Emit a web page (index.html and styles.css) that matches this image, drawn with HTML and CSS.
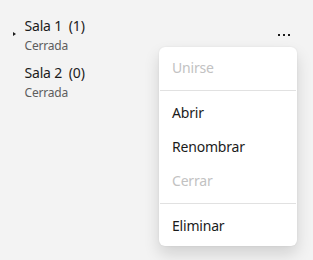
FILE: index.html
```html
<!DOCTYPE html>
<html lang="es">
<head>
<meta charset="utf-8">
<link rel="stylesheet" href="styles.css">
</head>
<body>
<div class="page">
  <ul class="rooms">
    <li class="room current">
      <span class="marker"></span>
      <div class="info">
        <div class="title">Sala 1&nbsp; (1)</div>
        <div class="sub">Cerrada</div>
      </div>
      <button class="more" aria-label="Más opciones">
        <svg width="14" height="4" viewBox="0 0 14 4"><rect x="0" y="1" width="2" height="2"/><rect x="5" y="1" width="2" height="2"/><rect x="10" y="1" width="2" height="2"/></svg>
      </button>
    </li>
    <li class="room">
      <span class="marker hidden"></span>
      <div class="info">
        <div class="title">Sala 2&nbsp; (0)</div>
        <div class="sub">Cerrada</div>
      </div>
    </li>
  </ul>
  <div class="menu">
    <div class="item disabled">Unirse</div>
    <div class="sep"></div>
    <div class="item">Abrir</div>
    <div class="item">Renombrar</div>
    <div class="item disabled">Cerrar</div>
    <div class="sep"></div>
    <div class="item">Eliminar</div>
  </div>
</div>
</body>
</html>
```
FILE: styles.css
```css
html, body {
  margin: 0;
  padding: 0;
  background: #f3f3f3;
}
body {
  font-family: "Noto Sans", "Open Sans", sans-serif;
  color: #1b1b1b;
  width: 313px;
  height: 260px;
  overflow: hidden;
}
.page {
  position: relative;
  width: 313px;
  height: 260px;
}
.rooms {
  list-style: none;
  margin: 0;
  padding: 16px 0 0 0;
  display: flex;
  flex-direction: column;
  gap: 9px;
}
.room {
  display: flex;
  align-items: flex-start;
  padding-left: 12px;
  padding-right: 21px;
}
.marker {
  width: 0;
  height: 0;
  border-top: 2.5px solid transparent;
  border-bottom: 2.5px solid transparent;
  border-left: 3.5px solid #1b1b1b;
  margin-left: 1px;
  margin-right: 8.5px;
  margin-top: 16px;
}
.marker.hidden {
  visibility: hidden;
}
.info {
  flex: 1;
}
.title {
  font-size: 14px;
  line-height: 20px;
  letter-spacing: -0.2px;
}
.sub {
  font-size: 12px;
  line-height: 16px;
  margin-top: 2px;
  color: #5d5d5d;
  letter-spacing: -0.2px;
}
.more {
  border: 0;
  background: transparent;
  padding: 0;
  margin-top: 17px;
  display: flex;
  fill: #1b1b1b;
}
.menu {
  position: absolute;
  left: 159px;
  top: 47px;
  width: 138px;
  box-sizing: border-box;
  background: #fff;
  border-radius: 6px;
  padding: 4px 0 3px;
  box-shadow: 0 8px 16px rgba(0,0,0,0.14), 0 0 2px rgba(0,0,0,0.08);
}
.item {
  height: 34px;
  line-height: 34px;
  padding-left: 13px;
  font-size: 14px;
  letter-spacing: -0.2px;
  color: #1b1b1b;
}
.item.disabled {
  color: #c2c2c2;
}
.sep {
  height: 1px;
  background: #e1e1e1;
  margin: 5px 1px;
}
```
